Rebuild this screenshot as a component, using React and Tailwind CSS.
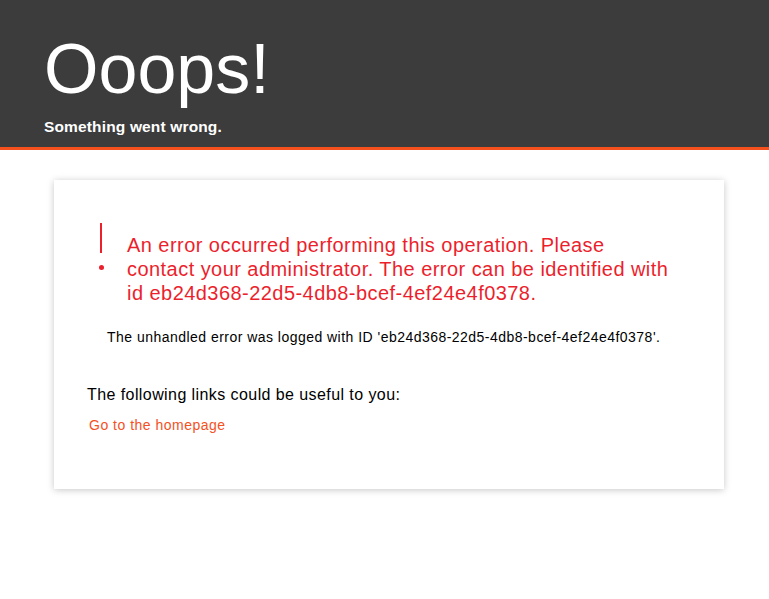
const errorId = 'eb24d368-22d5-4db8-bcef-4ef24e4f0378';

const App = () => {
    return (
        <div className="min-h-[599px] bg-white font-['Liberation_Sans',Arial,sans-serif]">
            {/* Header */}
            <header className="bg-[#3c3c3c] border-b-[3px] border-[#f4511e] pl-[44px] pt-[34px] pb-[11px] text-white">
                <h1 className="text-[70px] leading-[70px] font-normal">Ooops!</h1>
                <p className="mt-[14px] text-[15.5px] leading-[18px] font-bold tracking-[0.15px]">Something went wrong.</p>
            </header>

            {/* Card */}
            <div className="ml-[54px] mt-[30px] w-[670px] bg-white shadow-[0_1px_7px_rgba(0,0,0,0.22)] pt-[43px] pb-[56px]">
                <div className="flex items-start pl-[44px]">
                    <div className="flex flex-col items-center w-[6px] mr-[23px]">
                        <div className="w-[2.5px] h-[30px] bg-[#ec1f2d]" />
                        <div className="w-[5px] h-[5px] rounded-full bg-[#ec1f2d] mt-[12px]" />
                    </div>
                    <p className="mt-[10px] w-[548px] text-[20px] leading-[24px] tracking-[0.45px] text-[#ec1f2d]">
                        An error occurred performing this operation. Please contact your administrator. The error can be identified with id {errorId}.
                    </p>
                </div>

                <p className="mt-[24px] pl-[53px] text-[14px] leading-[16px] tracking-[0.47px] text-black">
                    The unhandled error was logged with ID '{errorId}'.
                </p>

                <p className="mt-[41px] pl-[33px] text-[16px] leading-[18px] tracking-[0.42px] text-black">
                    The following links could be useful to you:
                </p>

                <a href="#" className="block mt-[13px] pl-[35px] text-[14px] leading-[16px] tracking-[0.5px] text-[#f4511e]">
                    Go to the homepage
                </a>
            </div>
        </div>
    );
};

export default App;
